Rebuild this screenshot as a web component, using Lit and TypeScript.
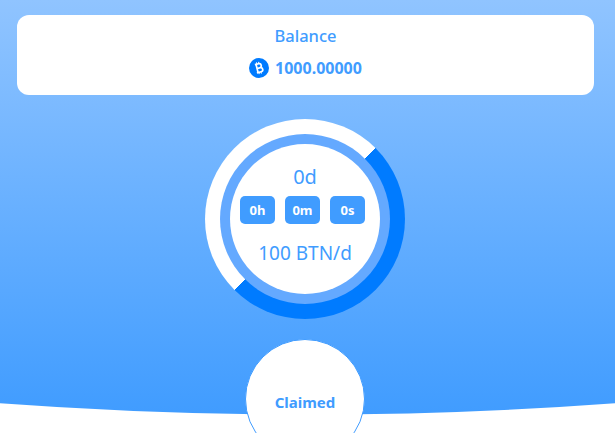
import { LitElement, html, css } from "lit";
import { customElement } from "lit/decorators.js";

@customElement("app-root")
export class AppRoot extends LitElement {
  static styles = css`
    :host {
      display: block;
      font-family: "Noto Sans", "Open Sans", sans-serif;
      color: #409cff;
    }
    .page {
      position: relative;
      height: 433px;
      overflow: hidden;
      background: #fff;
    }
    .sky {
      position: absolute;
      inset: 0;
      background: linear-gradient(#90c4ff 0, #409cff 415px);
      clip-path: path("M0 0H615V403.3Q307.5 426 0 403.3Z");
    }
    .content {
      position: relative;
      display: flex;
      flex-direction: column;
      align-items: center;
      padding: 15px 21px 0 17px;
    }
    .card {
      box-sizing: border-box;
      width: 100%;
      height: 80px;
      background: #fff;
      border-radius: 12px;
      display: flex;
      flex-direction: column;
      align-items: center;
      padding-top: 10px;
    }
    .title {
      font-size: 16.5px;
      font-weight: 500;
      line-height: 22px;
    }
    .balance {
      display: flex;
      align-items: center;
      gap: 6px;
      margin-top: 10.5px;
      font-size: 16px;
      font-weight: 700;
      line-height: 20px;
    }
    .coin {
      width: 20px;
      height: 20px;
      display: block;
    }
    .ring {
      box-sizing: border-box;
      width: 200px;
      height: 200px;
      margin: 24px 1px 0 0;
      padding: 15px;
      border-radius: 50%;
      background: conic-gradient(from 45deg, #007bff 0 180deg, #fff 180deg 360deg);
    }
    .track {
      box-sizing: border-box;
      width: 170px;
      height: 170px;
      padding: 10px;
      border-radius: 50%;
      background: #64a9ff;
    }
    .face {
      box-sizing: border-box;
      width: 150px;
      height: 150px;
      border-radius: 50%;
      background: #fff;
      display: flex;
      flex-direction: column;
      align-items: center;
      padding-top: 19px;
    }
    .days {
      font-size: 20px;
      line-height: 28px;
    }
    .rate {
      font-size: 19px;
      line-height: 28px;
      margin-top: 15px;
    }
    .units {
      display: flex;
      gap: 10px;
      margin: 5px 5px 0 0;
    }
    .unit {
      width: 35px;
      height: 28px;
      border-radius: 5px;
      background: #409cff;
      color: #fff;
      font-size: 13px;
      font-weight: 700;
      display: flex;
      align-items: center;
      justify-content: center;
    }
    .claim {
      box-sizing: border-box;
      flex: none;
      width: 120px;
      height: 120px;
      margin: 20px 1px 0 0;
      padding-top: 6px;
      border-radius: 50%;
      background: #fff;
      border: 1px solid #409cff;
      display: flex;
      align-items: center;
      justify-content: center;
      font-size: 15px;
      font-weight: 700;
    }
  `;

  render() {
    return html`
      <div class="page">
        <div class="sky"></div>
        <div class="content">
          <section class="card">
            <div class="title">Balance</div>
            <div class="balance">
              <svg class="coin" viewBox="0 0 20 20" aria-hidden="true">
                <circle cx="10" cy="10" r="10" fill="#007bff"></circle>
                <g transform="rotate(-14 10 10)" fill="none" stroke="#fff" stroke-width="1.7">
                  <path d="M6.8 5.8h3.9a2 2 0 0 1 0 4.2H8M8 10h3.2a2.1 2.1 0 0 1 0 4.2H6.8"></path>
                  <path d="M8 5.8v8.4" stroke-width="1.7"></path>
                  <path d="M8.8 4v1.8M11 4v1.8M8.8 14.2V16M11 14.2V16" stroke-width="1"></path>
                </g>
              </svg>
              <span>1000.00000</span>
            </div>
          </section>
          <div class="ring">
            <div class="track">
              <div class="face">
                <div class="days">0d</div>
                <div class="units">
                  <div class="unit">0h</div>
                  <div class="unit">0m</div>
                  <div class="unit">0s</div>
                </div>
                <div class="rate">100 BTN/d</div>
              </div>
            </div>
          </div>
          <div class="claim">Claimed</div>
        </div>
      </div>
    `;
  }
}
